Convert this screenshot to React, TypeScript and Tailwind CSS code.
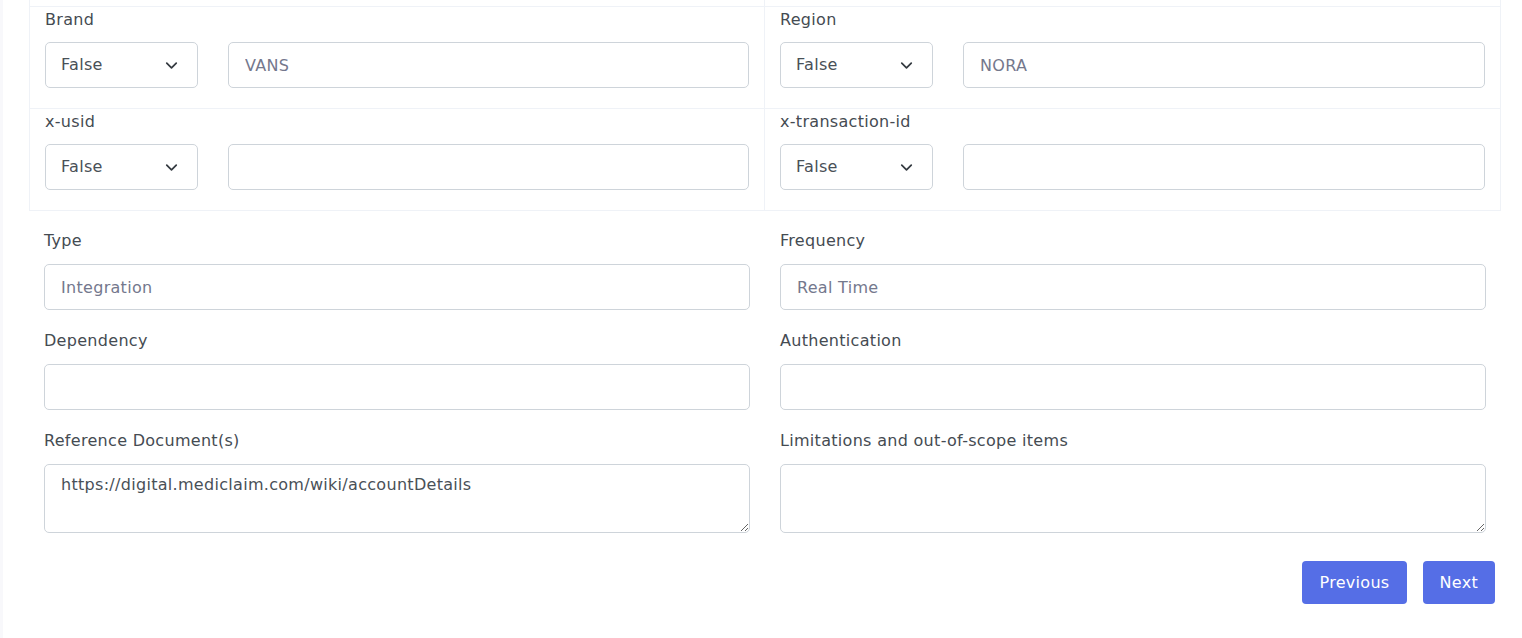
import { ChevronDown } from "lucide-react";

const font = { fontFamily: '"DejaVu Sans", "Liberation Sans", sans-serif' };

function FlagSelect() {
  return (
    <div className="flex h-[46px] w-[153px] shrink-0 items-center justify-between rounded-[5px] border border-[#ced4da] bg-white pl-[15px] pr-[16px] text-[16px] tracking-[0.3px] text-[#495057]">
      <span>False</span>
      <ChevronDown className="size-[19px] text-[#343a40]" strokeWidth={2.2} />
    </div>
  );
}

function HeaderCell({
  label,
  value,
  left,
}: {
  label: string;
  value?: string;
  left?: boolean;
}) {
  return (
    <div
      className={
        "border-b border-[#eff2f7] px-[15px] pb-5 pt-[2px] " +
        (left ? "border-l border-r" : "border-r")
      }
    >
      <div className="mb-[11px] text-[16px] leading-[22px] tracking-[0.3px] text-[#454b52]">
        {label}
      </div>
      <div className="flex gap-[30px]">
        <FlagSelect />
        <input
          readOnly
          placeholder={value}
          className="h-[46px] min-w-0 flex-1 rounded-[5px] border border-[#ced4da] px-4 text-[16px] tracking-[0.3px] text-[#495057] outline-none placeholder:text-[#74788d]"
        />
      </div>
    </div>
  );
}

function Field({
  label,
  placeholder,
}: {
  label: string;
  placeholder?: string;
}) {
  return (
    <div className="flex flex-col">
      <label className="mb-3 text-[16px] leading-[22px] tracking-[0.3px] text-[#454b52]">
        {label}
      </label>
      <input
        readOnly
        placeholder={placeholder}
        className="h-[46px] rounded-[5px] border border-[#ced4da] px-4 text-[16px] tracking-[0.3px] text-[#495057] outline-none placeholder:text-[#74788d]"
      />
    </div>
  );
}

function AreaField({ label, value }: { label: string; value?: string }) {
  return (
    <div className="flex flex-col">
      <label className="mb-3 text-[16px] leading-[22px] tracking-[0.3px] text-[#454b52]">
        {label}
      </label>
      <textarea
        readOnly
        defaultValue={value}
        className="h-[69px] resize-y rounded-[5px] border border-[#ced4da] px-4 py-[9px] text-[16px] leading-[22px] tracking-[0.3px] text-[#495057] outline-none"
      />
    </div>
  );
}

export default function App() {
  return (
    <div className="min-h-[638px] bg-[#f8f8fb] pl-[3px]" style={font}>
      <div className="h-[638px] overflow-hidden bg-white pl-[26px] pr-[21px]">
        {/* header mapping table, scrolled so its previous row is cut */}
        <div className="grid grid-cols-2">
          <div className="h-[7px] border-b border-l border-r border-[#eff2f7]" />
          <div className="h-[7px] border-b border-r border-[#eff2f7]" />
          <HeaderCell left label="Brand" value="VANS" />
          <HeaderCell label="Region" value="NORA" />
          <HeaderCell left label="x-usid" />
          <HeaderCell label="x-transaction-id" />
        </div>

        <div className="px-[15px] pt-[19px]">
          <div className="grid grid-cols-2 gap-x-[30px] gap-y-[20px]">
            <Field label="Type" placeholder="Integration" />
            <Field label="Frequency" placeholder="Real Time" />
            <Field label="Dependency" />
            <Field label="Authentication" />
            <AreaField
              label="Reference Document(s)"
              value="https://digital.mediclaim.com/wiki/accountDetails"
            />
            <AreaField label="Limitations and out-of-scope items" />
          </div>

          <div className="mt-7 flex justify-end gap-4">
            <button className="h-[43px] rounded-[4px] bg-[#556ee6] px-[17px] text-[16px] tracking-[0.3px] text-white">
              Previous
            </button>
            <button className="-mr-[9px] h-[43px] rounded-[4px] bg-[#556ee6] px-[17px] text-[16px] tracking-[0.3px] text-white">
              Next
            </button>
          </div>
        </div>
      </div>
    </div>
  );
}
